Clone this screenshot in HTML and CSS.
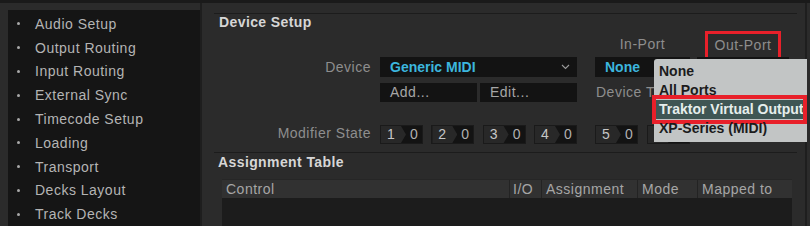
FILE: index.html
```html
<!DOCTYPE html>
<html>
<head>
<meta charset="utf-8">
<link rel="stylesheet" href="styles.css">
</head>
<body>
<div class="topbar"></div>
<div class="app">
  <nav class="sidebar">
    <ul>
      <li>Audio Setup</li>
      <li>Output Routing</li>
      <li>Input Routing</li>
      <li>External Sync</li>
      <li>Timecode Setup</li>
      <li>Loading</li>
      <li>Transport</li>
      <li>Decks Layout</li>
      <li>Track Decks</li>
    </ul>
  </nav>
  <main class="main">
    <section class="section device">
      <h2 class="heading">Device Setup</h2>
      <div class="row r0">
        <span class="lbl"></span>
        <span class="ca"></span>
        <span class="cb hdr">In-Port</span>
        <span class="cc hdr"><span class="boxed">Out-Port</span></span>
      </div>
      <div class="row r1">
        <span class="lbl">Device</span>
        <span class="ca select"><span>Generic MIDI</span>
          <svg class="chev" width="9" height="6" viewBox="0 0 9 6"><path d="M1 1 L4.5 4.5 L8 1" fill="none" stroke="#9a9a9a" stroke-width="1.1"/></svg>
        </span>
        <span class="cb select"><span>None</span></span>
        <span class="cc select"></span>
      </div>
      <div class="row r2">
        <span class="lbl"></span>
        <span class="ca btns"><span class="btn">Add...</span><span class="btn">Edit...</span></span>
        <span class="cb lbl2">Device Type</span>
        <span class="cc"></span>
      </div>
      <div class="row r3">
        <span class="lbl">Modifier State</span>
        <span class="ca mods">
          <span class="mod"><span class="k">1</span><span class="v">0</span></span>
          <span class="mod"><span class="k">2</span><span class="v">0</span></span>
          <span class="mod"><span class="k">3</span><span class="v">0</span></span>
          <span class="mod"><span class="k">4</span><span class="v">0</span></span>
        </span>
        <span class="cb mods">
          <span class="mod"><span class="k">5</span><span class="v">0</span></span>
          <span class="mod"><span class="k"></span><span class="v"></span></span>
        </span>
        <span class="cc"></span>
      </div>
    </section>
    <section class="section assign">
      <h2 class="heading h2b">Assignment Table</h2>
      <div class="table">
        <div class="thead">
          <span class="th c1">Control</span>
          <span class="th c2">I/O</span>
          <span class="th c3">Assignment</span>
          <span class="th c4">Mode</span>
          <span class="th c5">Mapped to</span>
        </div>
        <div class="tbody"></div>
      </div>
    </section>
    <div class="menu">
      <div class="item">None</div>
      <div class="item">All Ports</div>
      <div class="item sel">Traktor Virtual Output</div>
      <div class="item">XP-Series (MIDI)</div>
    </div>
  </main>
</div>
</body>
</html>
```
FILE: styles.css
```css
* { box-sizing: border-box; }
html, body { margin: 0; padding: 0; }
body {
  width: 810px;
  height: 226px;
  overflow: hidden;
  background: #2b2b2b;
  font-family: "Liberation Sans", Arial, sans-serif;
  font-size: 14px;
  color: #b6b6b6;
}
.topbar { height: 3px; background: #1a1a1a; }
.app { display: flex; height: 223px; overflow: hidden; }

.sidebar {
  width: 192px;
  margin: 7px 0 0 8px;
  background: #151515;
  padding-top: 2px;
}
.sidebar ul { list-style: none; margin: 0; padding: 0; }
.sidebar li {
  display: flex;
  align-items: center;
  height: 23.8px;
  letter-spacing: 0.5px;
  color: #b4b4b4;
}
.sidebar li::before {
  content: "";
  width: 3px;
  height: 3px;
  border-radius: 50%;
  background: #a8a8a8;
  margin: 0 15px 0 9px;
}

.main {
  position: relative;
  flex: 1;
  margin-right: 3px;
  border-left: 2px solid #1e1e1e;
  border-right: 2px solid #1e1e1e;
  padding: 10px 8px 0 12px;
}
.section { border-top: 1px solid #1c1c1c; }
.device { padding-bottom: 8px; }
.heading {
  margin: 0;
  padding-left: 5px;
  height: 17px;
  line-height: 17px;
  font-size: 14px;
  font-weight: bold;
  letter-spacing: 0.4px;
  color: #d6d6d6;
}
.h2b { padding-left: 4px; height: 18px; line-height: 18px; }

.row { display: flex; }
.lbl {
  width: 157px;
  margin-right: 9px;
  text-align: right;
  color: #8e8e8e;
  letter-spacing: 0.5px;
  flex-shrink: 0;
}
.ca { width: 197px; margin-right: 18px; flex-shrink: 0; }
.cb { width: 95px; margin-right: 7px; flex-shrink: 0; }
.cc { width: 92px; flex-shrink: 0; }

.r0 { height: 26px; }
.hdr {
  line-height: 26px;
  text-align: center;
  color: #8e8e8e;
  letter-spacing: 0.5px;
}
.boxed {
  display: inline-block;
  border: 3px solid #e8202a;
  padding: 3px 7px;
  line-height: 17px;
  vertical-align: top;
}

.r1 { height: 20px; line-height: 20px; }
.select {
  display: flex;
  justify-content: space-between;
  align-items: center;
  background: #131313;
  padding: 0 7px 0 10px;
  color: #3cb6de;
  font-weight: bold;
}

.r2 { height: 19px; line-height: 19px; margin-top: 6px; }
.btns { display: flex; gap: 3px; }
.btn {
  flex: 1;
  background: #131313;
  padding-left: 10px;
  color: #a6a6a6;
  letter-spacing: 0.5px;
}
.lbl2 { color: #8e8e8e; letter-spacing: 0.5px; padding-left: 1px; white-space: nowrap; overflow: hidden; }

.r3 { height: 19px; line-height: 17px; margin-top: 23px; }
.mods { display: flex; justify-content: space-between; }
.mod {
  display: flex;
  width: 43px;
  height: 19px;
  background: #131313;
  border: 1px solid #1a1a1a;
  font-size: 14px;
}
.mod .k {
  width: 25px;
  background: #282828;
  clip-path: polygon(0 0, 20px 0, 25px 50%, 20px 100%, 0 100%);
  padding-left: 6px;
  color: #c6c6c6;
}
.mod .v { flex: 1; padding-left: 4px; color: #b0b0b0; }

.table { margin: 8px 5px 0 8px; }
.thead {
  display: flex;
  height: 19px;
  background: #313131;
  border-top: 1px solid #262626;
}
.th {
  line-height: 18px;
  padding-left: 4px;
  color: #a6a6a6;
  letter-spacing: 0.5px;
  border-right: 1px solid #232323;
  white-space: nowrap;
}
.c1 { width: 288px; }
.c2 { width: 32px; padding-left: 3px; }
.c3 { width: 96px; }
.c4 { width: 60px; }
.c5 { width: 94px; border-right: 0; }
.tbody { height: 30px; background: #1c1c1c; }

.menu {
  position: absolute;
  left: 452px;
  top: 56px;
  width: 153px;
  height: 83px;
  background: #c2c5c5;
  border-radius: 3px 0 0 0;
  padding-top: 3px;
}
.item {
  position: relative;
  height: 19px;
  line-height: 19px;
  padding-left: 5px;
  font-size: 14px;
  font-weight: bold;
  color: #1c1c1c;
  white-space: nowrap;
}
.item.sel { background: #3f5654; color: #e6eeec; }
.item.sel::after {
  content: "";
  position: absolute;
  top: -5px;
  bottom: -5px;
  left: -2px;
  right: 0;
  border: 4px solid #e8202a;
}
```
